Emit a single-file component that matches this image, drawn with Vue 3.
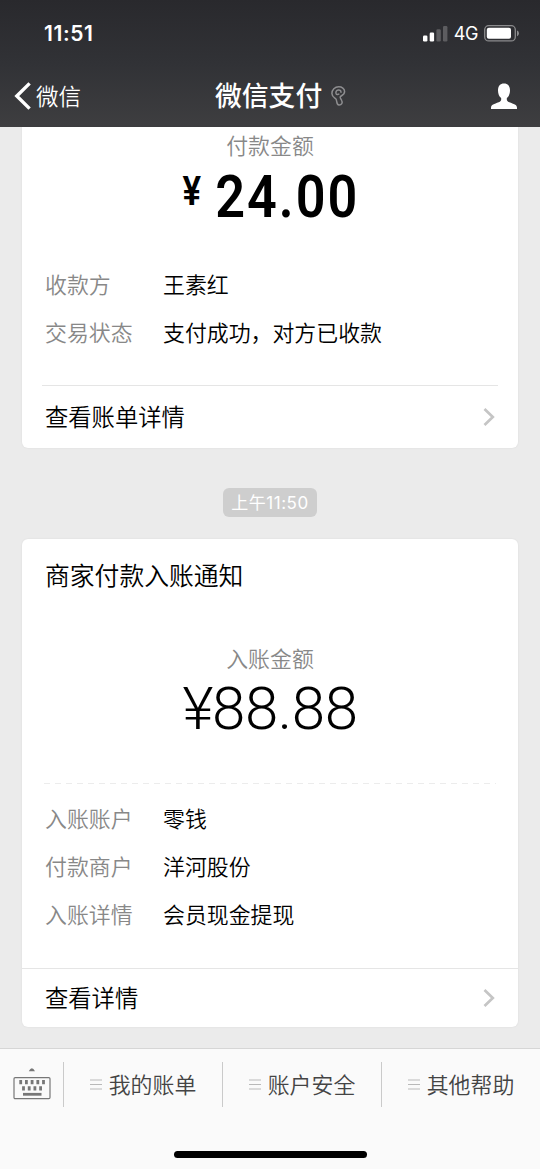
<script setup>
const payment = {
  rows: [
    { label: '收款方', value: '王素红' },
    { label: '交易状态', value: '支付成功，对方已收款' },
  ],
}
const income = {
  rows: [
    { label: '入账账户', value: '零钱' },
    { label: '付款商户', value: '洋河股份' },
    { label: '入账详情', value: '会员现金提现' },
  ],
}
const menus = ['我的账单', '账户安全', '其他帮助']
</script>

<template>
  <div class="screen">
    <header class="header">
      <div class="status">
        <span class="time">11:51</span>
        <div class="status-right">
          <svg class="signal" width="25" height="16" viewBox="0 0 25 16">
            <rect x="0" y="9.5" width="4.4" height="6" rx="1.2" fill="#fff" />
            <rect x="6.7" y="6.5" width="4.4" height="9" rx="1.2" fill="#fff" />
            <rect x="13.4" y="3.3" width="4.4" height="12.2" rx="1.2" fill="#5d5d60" />
            <rect x="20" y="0" width="4.4" height="15.5" rx="1.2" fill="#5d5d60" />
          </svg>
          <span class="net">4G</span>
          <svg class="battery" width="36" height="17" viewBox="0 0 36 17">
            <rect x="0.7" y="0.7" width="30.6" height="15.2" rx="4" fill="none" stroke="#8b8b8d" stroke-width="1.3" />
            <rect x="2.8" y="2.8" width="24.2" height="11" rx="2" fill="#fff" />
            <path d="M33 5.4c1.3.5 1.9 1.5 1.9 2.9s-.6 2.4-1.9 2.9z" fill="#8b8b8d" />
          </svg>
        </div>
      </div>
      <nav class="nav">
        <div class="back">
          <svg width="18" height="30" viewBox="0 0 18 30">
            <path d="M15.6 2.4 2.8 15l12.8 12.6" fill="none" stroke="#fff" stroke-width="3.4" />
          </svg>
          <span>微信</span>
        </div>
        <div class="title">
          <span>微信支付</span>
          <svg width="15" height="20" viewBox="0 0 15 20">
            <path d="M13.600 5.500C13.600 2.600 10.800.8 7.800.8 3.800.8.9 3.800.9 7.500c0 3 2.300 4 3.800 5.200 1.700 1.500.2 5.900 3.300 6.200 2.700.1 3.800-2.100 2.800-4.100-.8-1.800-2-2.800-1.600-4 .8-1.200 4.400-1.800 4.400-5.300zM10 6.200C10 4.500 8.600 3.900 7.400 4 5.200 4.200 4.500 6 5.100 7.600c.5 1.100 1.600 1.100 2.700.5" fill="none" stroke="#8e8e90" stroke-width="1.500" stroke-linecap="round" />
          </svg>
        </div>
        <svg class="person" width="28" height="27" viewBox="0 0 28 27">
          <path d="M14 .5c3.800 0 6 2.700 6 6.900 0 3.200-1.200 6-3.100 7.700-.4 2.300.3 3.300 2.400 4.100 4.500 1.700 7.700 2.400 7.700 5.600v1.200H1v-1.200c0-3.200 3.200-3.900 7.700-5.600 2.100-.8 2.800-1.800 2.400-4.100C9.200 13.400 8 10.600 8 7.400 8 3.200 10.200.5 14 .5z" fill="#fff" />
        </svg>
      </nav>
    </header>

    <main class="feed">
      <section class="card card-pay">
        <div class="caption">付款金额</div>
        <div class="amount bold"><span class="yen">¥</span><span>24.00</span></div>
        <div class="rows">
          <div v-for="r in payment.rows" :key="r.label" class="row">
            <span class="label">{{ r.label }}</span><span>{{ r.value }}</span>
          </div>
        </div>
        <div class="more inset">
          <span>查看账单详情</span>
          <svg width="12" height="20" viewBox="0 0 12 20"><path d="M1.500 2 9.800 10l-8.300 8" fill="none" stroke="#c5c5c5" stroke-width="2.700" /></svg>
        </div>
      </section>

      <div class="stamp">上午11:50</div>

      <section class="card card-income">
        <h2>商家付款入账通知</h2>
        <div class="caption">入账金额</div>
        <div class="amount light"><span class="thin-yen">¥</span><span>88.88</span></div>
        <svg class="dash" width="452" height="1" viewBox="0 0 452 1"><path d="M0 .5h452" stroke="#ececec" stroke-dasharray="6 5" /></svg>
        <div class="rows">
          <div v-for="r in income.rows" :key="r.label" class="row">
            <span class="label">{{ r.label }}</span><span>{{ r.value }}</span>
          </div>
        </div>
        <div class="more">
          <span>查看详情</span>
          <svg width="12" height="20" viewBox="0 0 12 20"><path d="M1.500 2 9.800 10l-8.300 8" fill="none" stroke="#c5c5c5" stroke-width="2.700" /></svg>
        </div>
      </section>
    </main>

    <footer class="footer">
      <div class="menu">
        <div class="keyboard">
          <svg width="38" height="34" viewBox="0 0 38 34">
            <path d="M15.800 4.200Q18.900-1.500 22 4.200z" fill="#777" />
            <rect x="1" y="10.600" width="36" height="21" rx="1.200" fill="none" stroke="#777" stroke-width="1.200" />
            <path d="M7.700 13v4.300M13.400 13v4.300M19.100 13v4.300M24.800 13v4.300M30.500 13v4.300M10.500 19.200v4.300M16.200 19.200v4.300M21.900 19.200v4.300M27.600 19.200v4.300" stroke="#777" stroke-width="2.800" />
            <path d="M10 27.300h18.500" stroke="#777" stroke-width="2.800" />
          </svg>
        </div>
        <div v-for="m in menus" :key="m" class="item">
          <svg width="12" height="11" viewBox="0 0 12 11"><path d="M0 1h12M0 5.500h12M0 10h12" stroke="#b9b9b9" stroke-width="1.100" /></svg>
          <span>{{ m }}</span>
        </div>
      </div>
      <div class="home"></div>
    </footer>
  </div>
</template>

<style>
body {
  margin: 0;
  background: #ebebeb;
}
</style>

<style scoped>
.screen {
  width: 540px;
  height: 1169px;
  display: flex;
  flex-direction: column;
  overflow: hidden;
  background: #ebebeb;
  color: #000;
  font-family: "Noto Sans CJK SC", sans-serif;
  font-weight: 350;
}
.header {
  height: 127px;
  flex: none;
  color: #fff;
  background: linear-gradient(#29292d, #313236 50%, #3e3e40);
}
.status {
  height: 67px;
  padding: 0 20px 0 44px;
  display: flex;
  align-items: center;
  justify-content: space-between;
  font-family: Inter, sans-serif;
}
.time {
  font-size: 21px;
  font-weight: 600;
  letter-spacing: 0.6px;
}
.status-right {
  display: flex;
  align-items: center;
}
.net {
  margin: 0 6px 0 6px;
  font-size: 18px;
  font-weight: 400;
  letter-spacing: -0.4px;
}
.nav {
  height: 58px;
  padding: 0 22px 0 14px;
  display: flex;
  align-items: center;
}
.back {
  width: 201px;
  display: flex;
  align-items: center;
  gap: 4px;
  font-size: 22.500px;
}
.back span,
.title span {
  line-height: 34px;
  padding-bottom: 2px;
}
.title {
  display: flex;
  align-items: center;
  gap: 9px;
  font-size: 26.800px;
  font-weight: 500;
}
.person {
  margin-left: auto;
}
.feed {
  height: 921px;
  flex: none;
  display: flex;
  flex-direction: column;
  align-items: center;
}
.card {
  width: 496px;
  background: #fff;
  box-shadow: 0 0 2px rgba(0, 0, 0, 0.08);
}
.card-pay {
  height: 321px;
  border-radius: 0 0 6px 6px;
}
.card-income {
  height: 488px;
  border-radius: 6px;
}
.caption {
  height: 36px;
  line-height: 36px;
  text-align: center;
  color: #888;
  font-size: 21.900px;
}
.amount {
  height: 68px;
  line-height: 68px;
  display: flex;
  justify-content: center;
  font-family: Roboto, sans-serif;
}
.bold {
  padding-left: 2px;
  font-size: 60px;
  font-weight: 600;
  letter-spacing: 2.300px;
  transform: scaleX(0.87);
}
.yen {
  font-size: 40px;
  line-height: 57px;
  margin-right: 14px;
}
.light {
  line-height: 65px;
  font-size: 60px;
  font-weight: 300;
  letter-spacing: -0.400px;
}
.thin-yen {
  margin-right: -1px;
}
.rows {
  padding: 0 23px;
  font-size: 21.900px;
}
.row {
  height: 48px;
  line-height: 46px;
  display: flex;
}
.label {
  width: 118px;
  color: #888;
}
.card-pay .rows {
  margin-top: 30px;
}
.more {
  height: 58px;
  padding: 0 23px;
  display: flex;
  align-items: center;
  justify-content: space-between;
  border-top: 1px solid #e5e5e5;
  font-size: 23.300px;
}
.more span {
  line-height: 34px;
  padding-bottom: 2px;
}
.inset {
  height: 62px;
  margin: 28px 20px 0;
  padding: 0 3px;
}
.stamp {
  height: 29px;
  margin: 40px 0 22px;
  padding: 0 8px;
  border-radius: 6px;
  background: #cecece;
  color: #fff;
  font: 17px/31px Inter, "Noto Sans CJK SC", sans-serif;
  letter-spacing: 0.500px;
}
h2 {
  margin: 0;
  padding: 0 23px;
  height: 73px;
  line-height: 71px;
  font-size: 24.800px;
  font-weight: 350;
}
.card-income .caption {
  margin-top: 28px;
}
.dash {
  display: block;
  margin: 39px auto 0 22px;
}
.card-income .rows {
  margin-top: 11px;
}
.card-income .more {
  margin-top: 29px;
}
.footer {
  height: 120px;
  border-top: 1px solid #d6d6d6;
  background: #fafafa;
}
.menu {
  height: 70px;
  display: flex;
  align-items: center;
}
.keyboard {
  width: 63px;
  display: flex;
  justify-content: center;
}
.item {
  flex: 1;
  height: 45px;
  display: flex;
  align-items: center;
  justify-content: center;
  gap: 7px;
  border-left: 1px solid #cacaca;
  color: #444;
  font-size: 21.900px;
}
.item span {
  line-height: 32px;
  padding-bottom: 1px;
}
.home {
  width: 193px;
  height: 7px;
  margin: 32px auto 0;
  border-radius: 4px;
  background: #000;
}
</style>
